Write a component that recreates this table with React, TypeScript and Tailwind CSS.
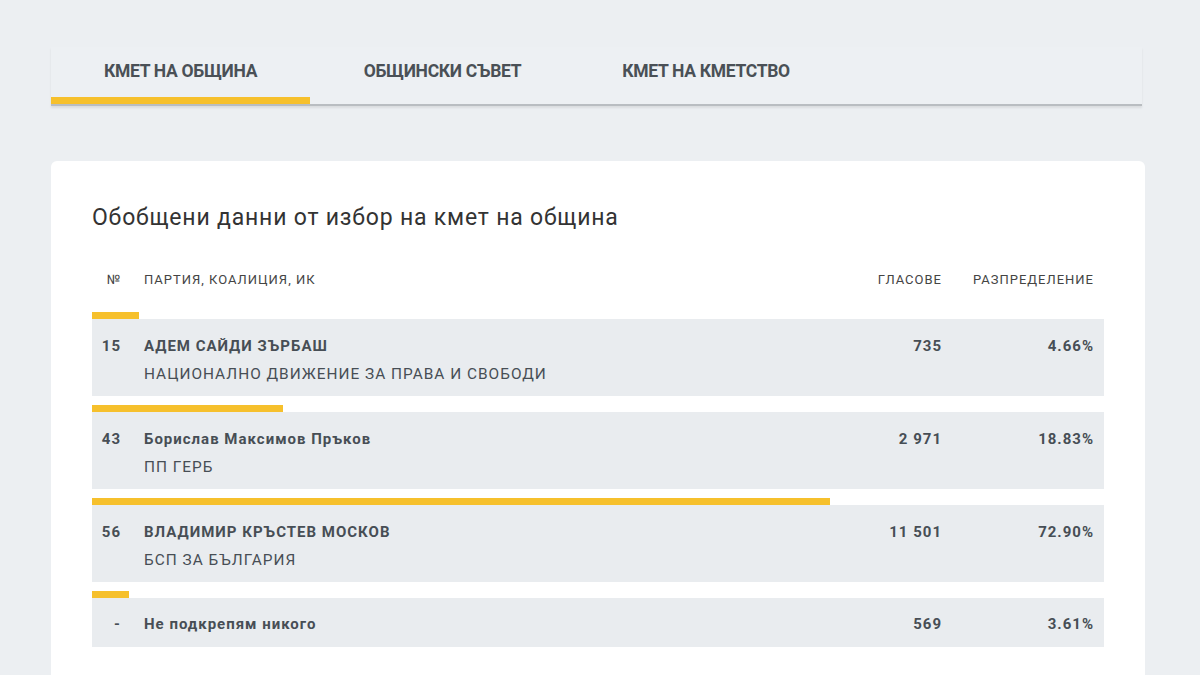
const tabs = [
  { label: "КМЕТ НА ОБЩИНА", w: "w-[259px]" },
  { label: "ОБЩИНСКИ СЪВЕТ", w: "w-[265px]" },
  { label: "КМЕТ НА КМЕТСТВО", w: "w-[262px]" },
];

const rows = [
  { no: "15", name: "АДЕМ САЙДИ ЗЪРБАШ", party: "НАЦИОНАЛНО ДВИЖЕНИЕ ЗА ПРАВА И СВОБОДИ", votes: "735", pct: 4.66 },
  { no: "43", name: "Борислав Максимов Пръков", party: "ПП ГЕРБ", votes: "2 971", pct: 18.83 },
  { no: "56", name: "ВЛАДИМИР КРЪСТЕВ МОСКОВ", party: "БСП ЗА БЪЛГАРИЯ", votes: "11 501", pct: 72.9 },
  { no: "-", name: "Не подкрепям никого", party: "", votes: "569", pct: 3.61 },
];

export default function App() {
  return (
    <div className="h-[675px] w-full overflow-hidden bg-[#eceff2] pt-[47px] font-['Roboto',sans-serif]">
      <div className="ml-[51px] flex h-[59px] w-[1091px] border-b-2 border-[#b9bdc1] bg-[#edf0f3] shadow-[0_2px_2px_rgba(0,0,0,0.08)]">
        {tabs.map((t, i) => (
          <div key={t.label} className={`relative flex ${t.w} items-center justify-center pb-[8px]`}>
            <span className="text-[17.5px] font-bold tracking-[-0.3px] text-[#4a5056]">{t.label}</span>
            {i === 0 && <div className="absolute bottom-0 left-0 h-[7px] w-full bg-[#f6c02c]" />}
          </div>
        ))}
      </div>

      <div className="ml-[51px] mt-[55px] w-[1094px] rounded-md bg-white px-[41px] pt-[42px] pb-[40px]">
        <h1 className="text-[23px] leading-[30px] tracking-[0.8px] text-[#333]">
          Обобщени данни от избор на кмет на община
        </h1>

        <div className="mt-[38px] flex w-[1012px] text-[13px] leading-[18px] tracking-[1px] text-[#444]">
          <div className="w-[29px] text-right">№</div>
          <div className="ml-[23px] flex-1">ПАРТИЯ, КОАЛИЦИЯ, ИК</div>
          <div className="w-[120px] text-right">ГЛАСОВЕ</div>
          <div className="w-[162px] pr-[10px] text-right">РАЗПРЕДЕЛЕНИЕ</div>
        </div>

        <div className="mt-[23px] flex w-[1012px] flex-col gap-[9px]">
          {rows.map((r) => (
            <div key={r.no}>
              <div className="h-[7px] bg-[#f6c02c]" style={{ width: `${r.pct}%` }} />
              <div
                className={`flex bg-[#e9ecef] text-[15px] leading-[28px] tracking-[1px] text-[#474e55] ${
                  r.party ? "pt-[13px] pb-[8px]" : "pt-[12px] pb-[9px]"
                }`}
              >
                <div className="w-[29px] text-right font-bold">{r.no}</div>
                <div className="ml-[23px] flex-1">
                  <div className="font-bold">{r.name}</div>
                  {r.party && <div className="text-[15.4px]">{r.party}</div>}
                </div>
                <div className="w-[120px] text-right font-bold">{r.votes}</div>
                <div className="w-[162px] pr-[10px] text-right font-bold">{r.pct.toFixed(2)}%</div>
              </div>
            </div>
          ))}
        </div>
      </div>
    </div>
  );
}
